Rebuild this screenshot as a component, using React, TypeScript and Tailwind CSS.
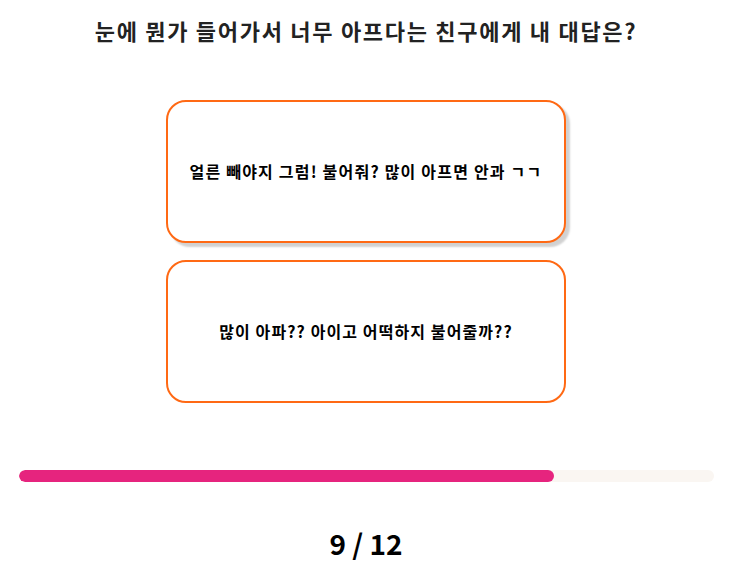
import React from "react";

const font = { fontFamily: '"Noto Sans CJK KR", "Noto Sans", sans-serif' };

export default function App() {
  return (
    <div className="w-[732px] h-[580px] bg-white flex flex-col items-center" style={font}>
      <h1 className="pt-[15px] text-[22px] leading-[30px] tracking-[1.7px] font-bold text-[#222222] text-center">
        눈에 뭔가 들어가서 너무 아프다는 친구에게 내 대답은?
      </h1>
      <div className="mt-[55px] flex flex-col gap-[17px]">
        <button className="w-[400px] h-[143px] border-2 border-[#ff6914] rounded-[20px] bg-white flex items-center justify-center pb-[2px] text-[16px] tracking-[1.2px] font-bold text-black shadow-[4px_4px_2px_rgba(0,0,0,0.18)]">
          얼른 빼야지 그럼! 불어줘? 많이 아프면 안과 ㄱㄱ
        </button>
        <button className="w-[400px] h-[143px] border-2 border-[#ff6914] rounded-[20px] bg-white flex items-center justify-center pb-[2px] text-[16px] tracking-[1.1px] font-bold text-black">
          많이 아파?? 아이고 어떡하지 불어줄까??
        </button>
      </div>
      <div className="mt-[67px] w-[695px] h-[12px] rounded-full bg-[#faf6f2] overflow-hidden">
        <div className="h-full w-[535px] rounded-full bg-[#e6247e]" />
      </div>
      <div className="mt-[41px] text-[28px] leading-[40px] font-bold text-black">9 / 12</div>
    </div>
  );
}
